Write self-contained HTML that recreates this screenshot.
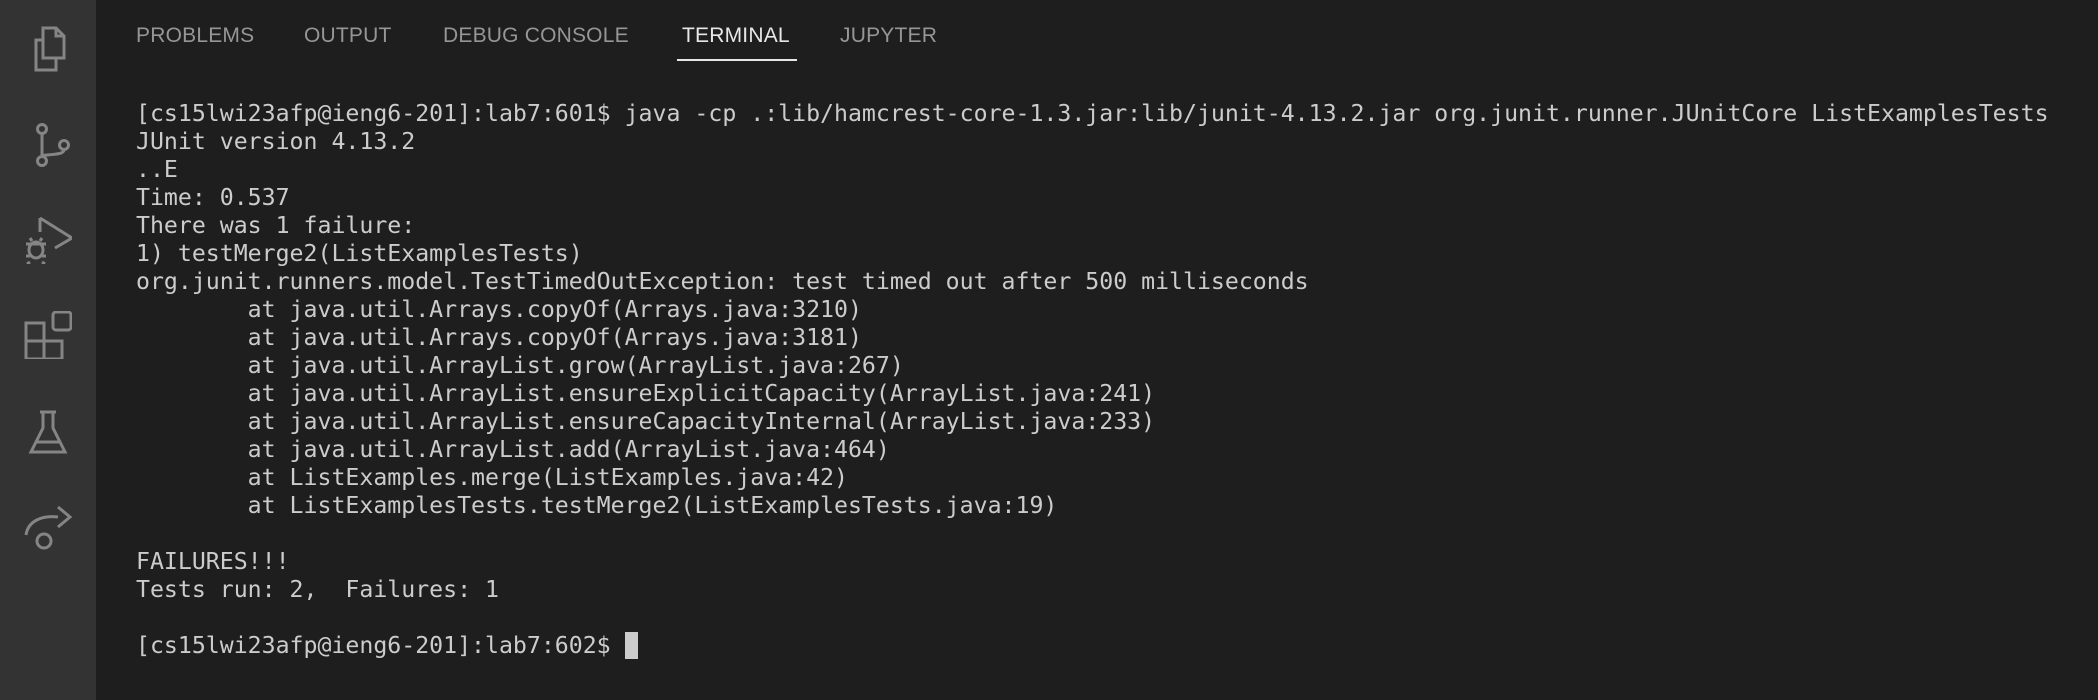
<!DOCTYPE html>
<html><head><meta charset="utf-8"><style>
html,body{margin:0;padding:0;width:2098px;height:700px;overflow:hidden;background:#1e1e1e}
#side{position:absolute;left:0;top:0;width:96px;height:700px;background:#333333}
#side svg{position:absolute;left:24px;width:48px;height:48px}
.tab{position:absolute;top:24px;font:21px "Liberation Sans",sans-serif;color:#969696;letter-spacing:0.2px}
.act{color:#e7e7e7}
#ul{position:absolute;left:677px;top:59px;width:120px;height:2px;background:#e7e7e7}
pre{position:absolute;left:136px;top:100px;margin:0;font:23.2px/28px "DejaVu Sans Mono",monospace;color:#cccccc}
.cur{display:inline-block;width:13px;height:27px;background:#cccccc;vertical-align:-6px}
</style></head><body>
<div id="side">
<svg style="top:24px" viewBox="0 0 48 48" fill="none" stroke="#858585" stroke-width="3"><path d="M19 4h13l8 8v22H19z"/><path d="M32 4v8h8"/><path d="M19 16h-7v30h20v-12"/></svg>
<svg style="top:119px" viewBox="0 0 48 48" fill="none" stroke="#858585" stroke-width="3"><circle cx="18" cy="10" r="4.5"/><circle cx="18" cy="42" r="4.5"/><circle cx="40" cy="26" r="4.5"/><path d="M18 15v22M40 31c0 6-22 4-22 6"/></svg>
<svg style="top:216px" viewBox="0 0 48 48" fill="none" stroke="#858585" stroke-width="3"><path d="M16 2v14M16 2l32 20-17 10"/><ellipse cx="12" cy="34" rx="7" ry="8"/><path d="M2 28h20M2 40h4M18 40h4M6 46l-3 2M18 46l3 2M8 25l-2-3M16 25l2-3"/></svg>
<svg style="top:311px" viewBox="0 0 48 48" fill="none" stroke="#858585" stroke-width="3"><rect x="2" y="12" width="18" height="18"/><rect x="2" y="30" width="18" height="18"/><rect x="20" y="30" width="18" height="18"/><rect x="29" y="1" width="18" height="18" rx="3"/></svg>
<svg style="top:408px" viewBox="0 0 48 48" fill="none" stroke="#858585" stroke-width="3"><path d="M16 4h16M19 4v16L7 44h34L29 20V4M12 34h24"/></svg>
<svg style="top:503px" viewBox="0 0 48 48" fill="none" stroke="#858585" stroke-width="3"><path d="M2 32c2-14 16-20 32-18M34 4l12 10-12 10"/><circle cx="20" cy="38" r="7"/></svg>
</div>
<div class="tab" style="left:136px">PROBLEMS</div>
<div class="tab" style="left:304px">OUTPUT</div>
<div class="tab" style="left:443px">DEBUG CONSOLE</div>
<div class="tab act" style="left:682px">TERMINAL</div>
<div class="tab" style="left:840px">JUPYTER</div>
<div id="ul"></div>
<pre>[cs15lwi23afp@ieng6-201]:lab7:601$ java -cp .:lib/hamcrest-core-1.3.jar:lib/junit-4.13.2.jar org.junit.runner.JUnitCore ListExamplesTests
JUnit version 4.13.2
..E
Time: 0.537
There was 1 failure:
1) testMerge2(ListExamplesTests)
org.junit.runners.model.TestTimedOutException: test timed out after 500 milliseconds
        at java.util.Arrays.copyOf(Arrays.java:3210)
        at java.util.Arrays.copyOf(Arrays.java:3181)
        at java.util.ArrayList.grow(ArrayList.java:267)
        at java.util.ArrayList.ensureExplicitCapacity(ArrayList.java:241)
        at java.util.ArrayList.ensureCapacityInternal(ArrayList.java:233)
        at java.util.ArrayList.add(ArrayList.java:464)
        at ListExamples.merge(ListExamples.java:42)
        at ListExamplesTests.testMerge2(ListExamplesTests.java:19)

FAILURES!!!
Tests run: 2,  Failures: 1

[cs15lwi23afp@ieng6-201]:lab7:602$ <span class="cur"></span></pre>
</body></html>
